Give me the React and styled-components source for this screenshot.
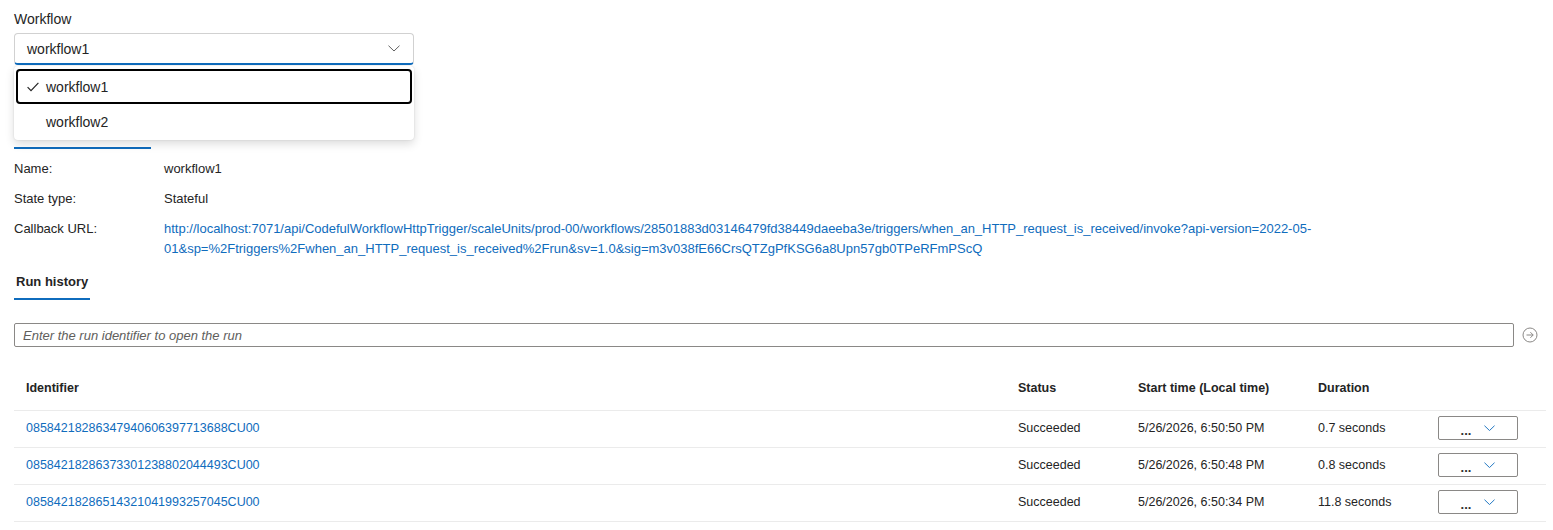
import React from 'react';
import styled, { createGlobalStyle } from 'styled-components';

const GlobalStyle = createGlobalStyle`
  body {
    margin: 0;
    background: #fff;
    color: #242424;
    font-family: "Segoe UI", "Liberation Sans", Arial, sans-serif;
  }
`;

const Page = styled.div`
  padding: 4px 7px 0 14px;
`;

const Field = styled.div`
  width: 400px;
`;

const FieldLabel = styled.div`
  font-size: 14px;
  line-height: 20px;
  padding: 5px 0 4px;
  color: #242424;
`;

const SelectWrap = styled.div`
  position: relative;
`;

const SelectBox = styled.div`
  box-sizing: border-box;
  height: 32px;
  display: flex;
  align-items: center;
  justify-content: space-between;
  padding: 0 13px 0 12px;
  border: 1px solid #d1d1d1;
  border-bottom: 2px solid #0f6cbd;
  border-radius: 4px;
  font-size: 14px;
  color: #242424;
`;

const Listbox = styled.div`
  position: absolute;
  top: calc(100% + 1px);
  left: 0;
  right: 0;
  z-index: 10;
  background: #fff;
  border-radius: 4px;
  padding: 3px 2px 1px;
  box-shadow: 0 4px 10px rgba(0, 0, 0, 0.14), 0 0 2px rgba(0, 0, 0, 0.12);
`;

const Option = styled.div`
  box-sizing: border-box;
  height: 35px;
  display: flex;
  align-items: center;
  gap: 7px;
  padding-left: 9px;
  border: 2px solid ${(p) => (p.$focused ? '#000' : 'transparent')};
  border-radius: 4px;
  font-size: 14px;
  color: #242424;
`;

const CheckSlot = styled.span`
  width: 12px;
  height: 12px;
  display: flex;
  align-items: center;
  visibility: ${(p) => (p.$on ? 'visible' : 'hidden')};
`;

const TabBar = styled.div`
  display: flex;
  margin-top: ${(p) => p.$gap}px;
`;

/* the first tab sits under the open listbox, so only its underline shows */
const Tab = styled.div`
  min-width: ${(p) => p.$minWidth || 0}px;
  min-height: 36px;
  box-sizing: border-box;
  padding: 8px 2px 6px;
  font-size: 13px;
  line-height: 20px;
  font-weight: 700;
  color: #242424;
  border-bottom: 2px solid #0f6cbd;
`;

const Props = styled.div`
  display: grid;
  grid-template-columns: 150px 1150px;
  margin-top: 5px;
  font-size: 13px;
  line-height: 20px;
`;

const PropLabel = styled.div`
  padding: 5px 0;
  color: #242424;
`;

const PropValue = styled.div`
  padding: 5px 0;
  color: ${(p) => (p.$link ? '#0f6cbd' : '#242424')};
`;

const SearchRow = styled.div`
  display: flex;
  align-items: center;
  margin-top: 23px;
`;

const SearchInput = styled.input`
  flex: 1;
  box-sizing: border-box;
  height: 24px;
  margin: 0;
  padding: 0 8px;
  border: 1px solid #8a8886;
  border-radius: 2px;
  font-family: inherit;
  font-size: 13px;
  color: #323130;
  outline: none;

  &::placeholder {
    color: #605e5c;
    font-style: italic;
  }
`;

const GoButton = styled.div`
  width: 32px;
  display: flex;
  justify-content: center;
  align-items: center;
`;

const Table = styled.div`
  margin-top: 21px;
`;

const Row = styled.div`
  display: grid;
  grid-template-columns: 1fr 120px 180px 120px 120px;
  align-items: center;
  height: ${(p) => (p.$head ? 43 : 37)}px;
  box-sizing: border-box;
  padding-bottom: 2px;
  border-bottom: 1px solid #ebebeb;
  font-size: 12.5px;
  font-weight: ${(p) => (p.$head ? 700 : 400)};
  color: #242424;
`;

const Cell = styled.div`
  padding-left: 12px;
  white-space: nowrap;
  color: ${(p) => (p.$link ? '#0f6cbd' : 'inherit')};
`;

const MenuButton = styled.div`
  box-sizing: border-box;
  width: 80px;
  height: 24px;
  margin-left: 12px;
  display: flex;
  align-items: center;
  justify-content: center;
  gap: 13px;
  border: 1px solid #8a8886;
  border-radius: 2px;
  font-size: 13px;
  font-weight: 700;
  color: #323130;
`;

const Dots = styled.span`
  line-height: 1;
  padding-top: 4px;
`;

const ChevronDown = ({ color = '#616161', w = 12 }) => (
  <svg width={w} height={w / 2 + 1} viewBox="0 0 12 7" fill="none">
    <path d="M0.5 0.7L6 6L11.5 0.7" stroke={color} strokeWidth="1" />
  </svg>
);

const CheckMark = () => (
  <svg width="12" height="10" viewBox="0 0 12 10" fill="none">
    <path d="M0.6 5.2L4 8.6L11.4 0.8" stroke="#242424" strokeWidth="1.2" />
  </svg>
);

const ArrowCircle = () => (
  <svg width="16" height="16" viewBox="0 0 16 16" fill="none">
    <circle cx="8" cy="8" r="7" stroke="#8a8886" strokeWidth="1" />
    <path d="M4.5 8H11.2M8.4 5.2L11.2 8L8.4 10.8" stroke="#8a8886" strokeWidth="1" />
  </svg>
);

const callbackUrl =
  'http://localhost:7071/api/CodefulWorkflowHttpTrigger/scaleUnits/prod-00/workflows/28501883d03146479fd38449daeeba3e/triggers/when_an_HTTP_request_is_received/invoke?api-version=2022-05-01&sp=%2Ftriggers%2Fwhen_an_HTTP_request_is_received%2Frun&sv=1.0&sig=m3v038fE66CrsQTZgPfKSG6a8Upn57gb0TPeRFmPScQ';

const runs = [
  { id: '08584218286347940606397713688CU00', start: '5/26/2026, 6:50:50 PM', duration: '0.7 seconds' },
  { id: '08584218286373301238802044493CU00', start: '5/26/2026, 6:50:48 PM', duration: '0.8 seconds' },
  { id: '08584218286514321041993257045CU00', start: '5/26/2026, 6:50:34 PM', duration: '11.8 seconds' },
];

const App = () => (
  <>
    <GlobalStyle />
    <Page>
      <Field>
        <FieldLabel>Workflow</FieldLabel>
        <SelectWrap>
          <SelectBox>
            workflow1
            <ChevronDown />
          </SelectBox>
          <Listbox>
            <Option $focused>
              <CheckSlot $on>
                <CheckMark />
              </CheckSlot>
              workflow1
            </Option>
            <Option>
              <CheckSlot />
              workflow2
            </Option>
          </Listbox>
        </SelectWrap>
      </Field>

      <TabBar $gap={48}>
        <Tab $minWidth={137} />
      </TabBar>

      <Props>
        <PropLabel>Name:</PropLabel>
        <PropValue>workflow1</PropValue>
        <PropLabel>State type:</PropLabel>
        <PropValue>Stateful</PropValue>
        <PropLabel>Callback URL:</PropLabel>
        <PropValue $link>{callbackUrl}</PropValue>
      </Props>

      <TabBar $gap={0}>
        <Tab>Run history</Tab>
      </TabBar>

      <SearchRow>
        <SearchInput placeholder="Enter the run identifier to open the run" />
        <GoButton>
          <ArrowCircle />
        </GoButton>
      </SearchRow>

      <Table>
        <Row $head>
          <Cell>Identifier</Cell>
          <Cell>Status</Cell>
          <Cell>Start time (Local time)</Cell>
          <Cell>Duration</Cell>
          <Cell />
        </Row>
        {runs.map((run) => (
          <Row key={run.id}>
            <Cell $link>{run.id}</Cell>
            <Cell>Succeeded</Cell>
            <Cell>{run.start}</Cell>
            <Cell>{run.duration}</Cell>
            <MenuButton>
              <Dots>...</Dots>
              <ChevronDown color="#0f6cbd" w={11} />
            </MenuButton>
          </Row>
        ))}
      </Table>
    </Page>
  </>
);

export default App;
